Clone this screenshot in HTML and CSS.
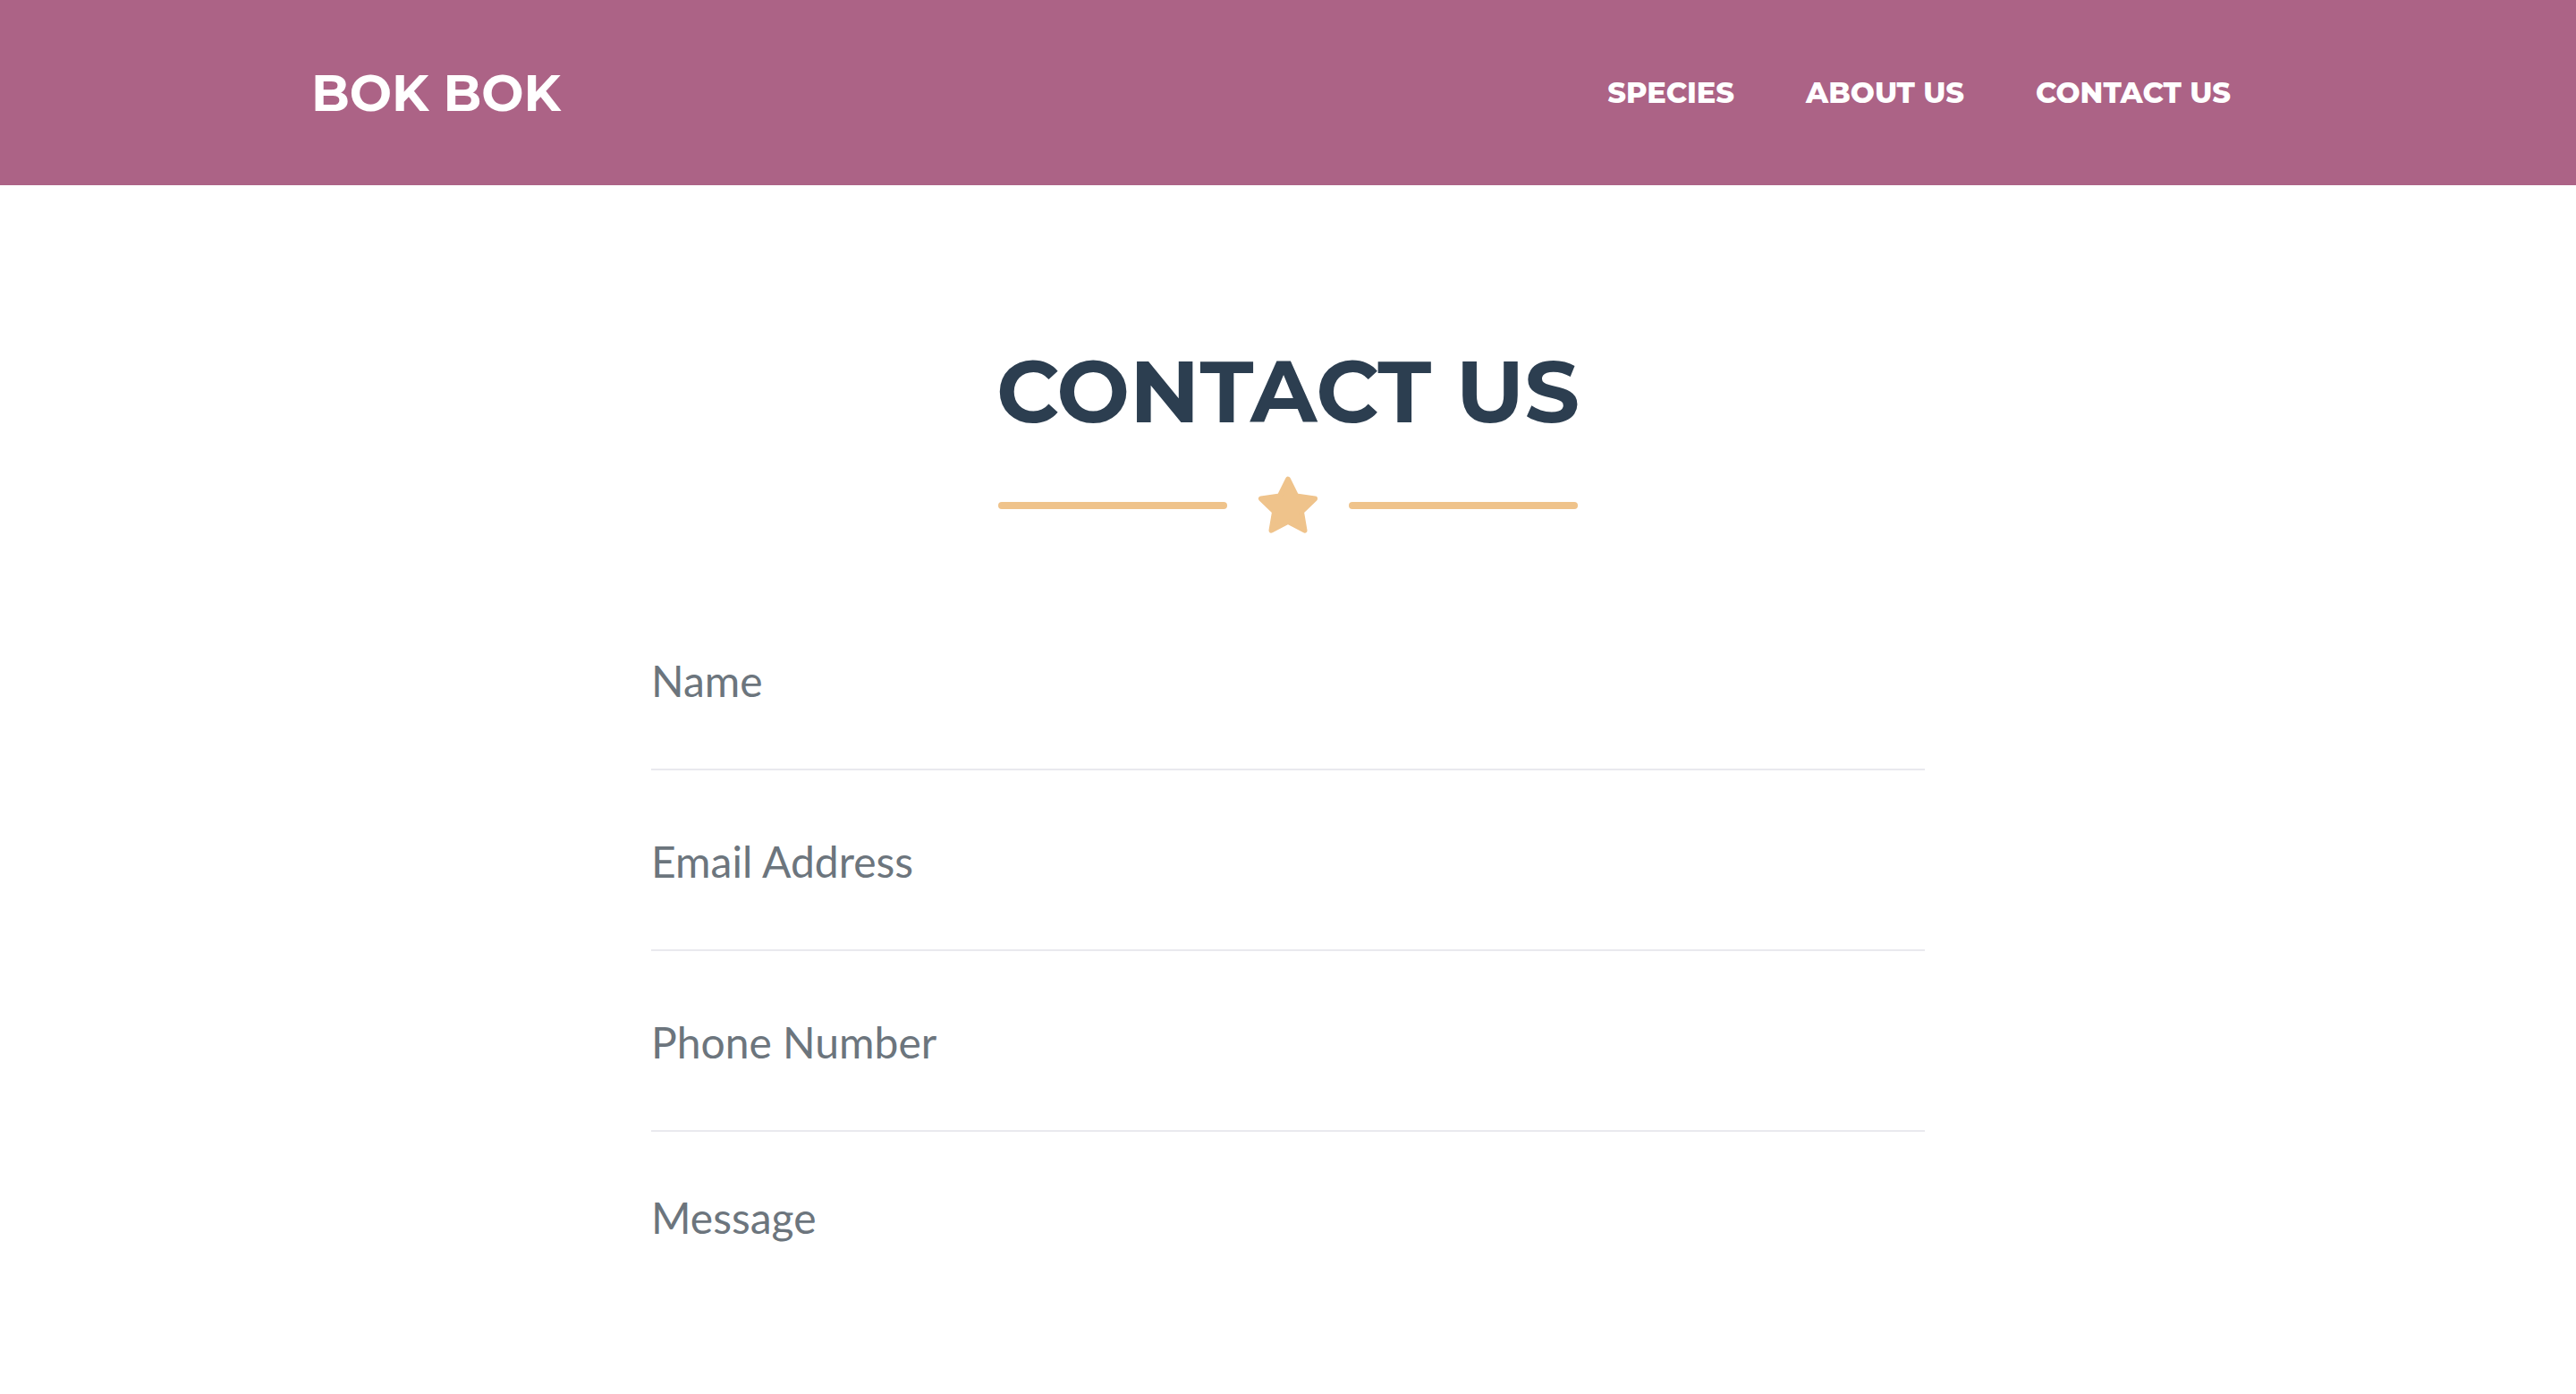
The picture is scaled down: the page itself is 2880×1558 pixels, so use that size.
FILE: index.html
```html
<!DOCTYPE html>
<html lang="en">
<head>
<meta charset="utf-8">
<title>Bok Bok - Contact Us</title>
<link rel="stylesheet" href="styles.css">
</head>
<body>
<header class="navbar">
  <div class="nav-inner">
    <a class="brand" href="#">BOK BOK</a>
    <nav class="nav-links">
      <a class="nav-link" href="#">Species</a>
      <a class="nav-link" href="#">About Us</a>
      <a class="nav-link" href="#">Contact Us</a>
    </nav>
  </div>
</header>
<section class="contact">
  <h2 class="section-heading">Contact Us</h2>
  <div class="divider">
    <span class="divider-line"></span>
    <svg class="divider-star" viewBox="0 0 100 100" aria-hidden="true">
      <polygon points="50,9 62.93,35.2 91.85,39.4 70.92,59.8 75.86,88.6 50,75 24.14,88.6 29.08,59.8 8.15,39.4 37.07,35.2" fill="#efc38b" stroke="#efc38b" stroke-width="8" stroke-linejoin="round"/>
    </svg>
    <span class="divider-line"></span>
  </div>
  <form class="contact-form">
    <div class="field"><span class="field-label">Name</span></div>
    <div class="field"><span class="field-label">Email Address</span></div>
    <div class="field"><span class="field-label">Phone Number</span></div>
    <div class="field field-message"><span class="field-label">Message</span></div>
  </form>
</section>
</body>
</html>
```
FILE: styles.css
```css
html, body {
  margin: 0;
  padding: 0;
  background: #ffffff;
}

body {
  font-family: "Lato", "Liberation Sans", sans-serif;
}

.navbar {
  height: 207px;
  background: #ac6386;
  display: flex;
  align-items: center;
}

.nav-inner {
  width: 2184px;
  margin: 0 auto;
  display: flex;
  align-items: center;
  justify-content: space-between;
}

.brand {
  font-family: "Montserrat", "Inter", sans-serif;
  font-weight: 700;
  font-size: 56px;
  line-height: 1;
  color: #ffffff;
  text-decoration: none;
}

.nav-links {
  display: flex;
  align-items: center;
}

.nav-link {
  font-family: "Montserrat", "Inter", sans-serif;
  font-weight: 800;
  font-size: 32px;
  line-height: 1;
  text-transform: uppercase;
  color: #ffffff;
  text-decoration: none;
  padding: 0 40px;
}

.nav-link:last-child {
  padding-right: 38px;
}

.contact {
  display: flex;
  flex-direction: column;
  align-items: center;
}

.section-heading {
  margin: 182px 0 0;
  font-family: "Montserrat", "Inter", sans-serif;
  font-weight: 700;
  font-size: 97px;
  line-height: 1;
  text-transform: uppercase;
  color: #2c3e50;
}

.divider {
  margin-top: 43px;
  display: flex;
  align-items: center;
  gap: 32px;
}

.divider-line {
  display: block;
  width: 256px;
  height: 8px;
  border-radius: 4px;
  background: #efc38b;
}

.divider-star {
  display: block;
  width: 72px;
  height: 72px;
}

.contact-form {
  width: 1424px;
  margin-top: 58px;
}

.field {
  padding: 72px 0 68px;
  border-bottom: 2px solid #e9e9ee;
}

.field-message {
  padding-top: 66px;
  border-bottom: none;
}

.field-label {
  display: block;
  font-family: "Lato", sans-serif;
  font-size: 48px;
  line-height: 60px;
  color: #6c757d;
}
```
